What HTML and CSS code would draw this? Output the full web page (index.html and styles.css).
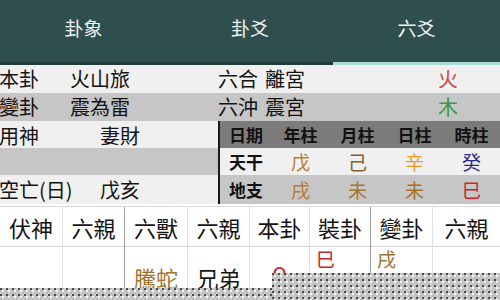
FILE: index.html
```html
<!DOCTYPE html>
<html lang="zh-Hant">
<head>
<meta charset="utf-8">
<link rel="stylesheet" href="styles.css">
</head>
<body>
<div class="page">
  <header class="tabs">
    <div class="tab">卦象</div>
    <div class="tab">卦爻</div>
    <div class="tab active">六爻</div>
  </header>

  <div class="row light full">
    <span class="lbl">本卦</span><span class="val">火山旅</span>
    <span class="lbl2">六合</span><span class="val2">離宮</span>
    <span class="elem fire">火</span>
  </div>
  <div class="row gray full">
    <span class="lbl">變卦</span><span class="val">震為雷</span>
    <span class="lbl2">六沖</span><span class="val2">震宮</span>
    <span class="elem wood">木</span>
  </div>

  <div class="split">
    <div class="leftcol">
      <div class="lrow light r3"><span class="k">用神</span><span class="v">妻財</span></div>
      <div class="lrow gray r4"></div>
      <div class="lrow light r5"><span class="k">空亡(日)</span><span class="v">戊亥</span></div>
    </div>
    <div class="pillars">
      <div class="prow head r3">
        <span>日期</span><span>年柱</span><span>月柱</span><span>日柱</span><span>時柱</span>
      </div>
      <div class="prow light r4">
        <span class="b">天干</span><span class="c-wu">戊</span><span class="c-ji">己</span><span class="c-xin">辛</span><span class="c-gui">癸</span>
      </div>
      <div class="prow gray r5">
        <span class="b">地支</span><span class="c-wu">戌</span><span class="c-wei">未</span><span class="c-wei">未</span><span class="c-si">巳</span>
      </div>
    </div>
  </div>

  <div class="yao">
    <div class="yhead">
      <div class="cell">伏神</div>
      <div class="cell sep">六親</div>
      <div class="cell">六獸</div>
      <div class="cell">六親</div>
      <div class="cell">本卦</div>
      <div class="cell sep">裝卦</div>
      <div class="cell">變卦</div>
      <div class="cell">六親</div>
    </div>
    <div class="ybody">
      <div class="cell"></div>
      <div class="cell sep"></div>
      <div class="cell low beast">騰蛇</div>
      <div class="cell low">兄弟</div>
      <div class="cell mark"><span class="o">o</span></div>
      <div class="cell sep top"><span class="si">巳</span></div>
      <div class="cell top"><span class="wu">戌</span></div>
      <div class="cell low2">子孫</div>
    </div>
  </div>

  <div class="mask mask-a"></div>
  <div class="mask mask-b"></div>
</div>
</body>
</html>
```

FILE: styles.css
```css
* { box-sizing: border-box; }
html, body { margin: 0; padding: 0; }
body {
  width: 500px;
  height: 300px;
  overflow: hidden;
  background: #ffffff;
  font-family: "Noto Sans CJK TC", "Noto Sans CJK SC", "Noto Sans", sans-serif;
  color: #141414;
}
.page {
  position: relative;
  width: 500px;
  height: 300px;
  overflow: hidden;
}

/* tabs */
.tabs {
  display: grid;
  grid-template-columns: 167px 166px 167px;
  height: 65px;
  background: #2e4f4e;
}
.tab {
  color: #f2f2f2;
  font-size: 19px;
  line-height: 26px;
  padding-top: 15px;
  text-align: center;
  border-bottom: 3px solid #233d3c;
}
.tab.active { border-bottom-color: #a9dcd5; }

/* info rows */
.row {
  display: grid;
  grid-template-columns: 70px 148px 47px 165px 36px 1fr;
  align-items: center;
  font-size: 20px;
  line-height: 28px;
  height: 28px;
}
.light { background: #f0f0f0; }
.gray { background: #c6c6c6; }
.lbl { grid-column: 1; margin-left: -1px; }
.val { grid-column: 2; }
.lbl2 { grid-column: 3; }
.val2 { grid-column: 4; }
.elem { grid-column: 5; text-align: center; }
.fire { color: #d2463f; }
.wood { color: #3c9a3c; }

.split {
  display: grid;
  grid-template-columns: 218px 282px;
}
.leftcol { display: flex; flex-direction: column; }
.lrow {
  display: grid;
  grid-template-columns: 100px 1fr;
  align-items: center;
  font-size: 20px;
}
.r3 { height: 27px; }
.r4 { height: 27px; }
.r5 { height: 29px; }
.k { margin-left: -1px; }

.pillars {
  border-left: 2px solid #1a1a1a;
  display: flex;
  flex-direction: column;
}
.prow {
  display: grid;
  grid-template-columns: 52px repeat(4, 1fr);
  align-items: center;
  font-size: 19px;
  text-align: center;
}
.prow.head { background: #7b7b7b; font-weight: bold; color: #111; font-size: 17px; }
.prow .b { font-weight: bold; color: #111; font-size: 17px; }
.c-wu { color: #b97d37; }
.c-ji { color: #86602a; }
.c-xin { color: #eb9a2e; }
.c-gui { color: #2c2a8c; }
.c-wei { color: #a8732a; }
.c-si { color: #c8262e; }

/* yao table */
.yao {
  margin-top: 2px;
  border-top: 1px solid #dcdcdc;
}
.yhead, .ybody {
  display: grid;
  grid-template-columns: 63px 62px 63px 62px 60px 61px 62px 67px;
}
.yhead { height: 40px; border-bottom: 1px solid #d6d6d6; }
.ybody { height: 60px; }
.cell {
  border-right: 1px solid #e0e0e0;
  font-size: 22px;
  line-height: 40px;
  text-align: center;
  position: relative;
}
.cell.sep { border-right-color: #9c9c9c; }
.cell:last-child { border-right: none; }
.ybody .cell { line-height: 30px; }
.low { padding-top: 15px; }
.low2 { padding-top: 22px; }
.beast { color: #a0722e; }
.mark { padding-top: 8px; }
.o { color: #c8262e; font-size: 24px; line-height: 24px; }
.top { text-align: left; padding-left: 6px; padding-top: 0; }
.top span { font-size: 19px; line-height: 24px; display: block; }
.si { color: #c8262e; }
.wu { color: #9d7434; }

/* overlay mask */
.mask {
  position: absolute;
  background-color: #c4c4c4;
  background-image:
    radial-gradient(circle at 1px 1px, #4a4a4a 0.8px, transparent 1.1px),
    radial-gradient(circle at 3px 3px, #f4f4f4 0.8px, transparent 1.1px),
    conic-gradient(#bcbcbc 25%, #cdcdcd 0 50%, #bcbcbc 0 75%, #cdcdcd 0);
  background-size: 6px 6px, 6px 6px, 4px 4px;
}
.mask-a { left: 0; top: 288px; width: 500px; height: 12px; }
.mask-b { left: 272px; top: 273px; width: 228px; height: 27px; }
```
